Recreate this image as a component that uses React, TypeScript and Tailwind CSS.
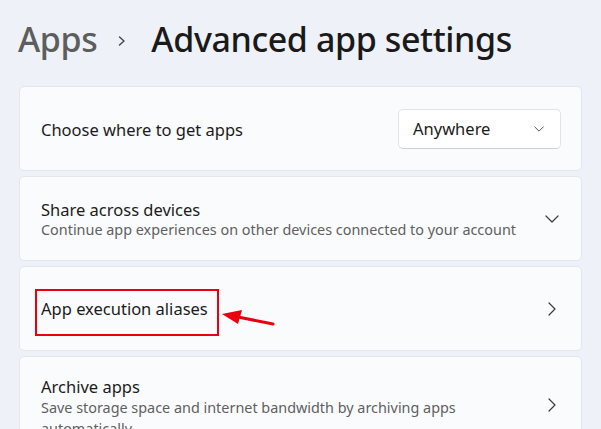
import React from 'react';

const ChevronDown = ({ className }: { className?: string }) => (
  <svg className={className} width="14" height="8" viewBox="0 0 14 8" fill="none">
    <path d="M1 1l6 6 6-6" stroke="#3b3b3b" strokeWidth="1.2" strokeLinecap="round" strokeLinejoin="round" />
  </svg>
);

const ChevronRight = ({ className }: { className?: string }) => (
  <svg className={className} width="8" height="14" viewBox="0 0 8 14" fill="none">
    <path d="M1 1l6 6-6 6" stroke="#3b3b3b" strokeWidth="1.2" strokeLinecap="round" strokeLinejoin="round" />
  </svg>
);

const Card = ({ children, className = '' }: { children: React.ReactNode; className?: string }) => (
  <div
    className={
      'flex items-center justify-between rounded-[5px] border border-[#e3e6eb] bg-[#fafbfd] pl-[21px] ' + className
    }
  >
    {children}
  </div>
);

export default function App() {
  return (
    <div
      className="h-[429px] w-[601px] overflow-hidden bg-[#eef2f8] text-[#1b1b1b]"
      style={{ fontFamily: '"Noto Sans", "Open Sans", sans-serif' }}
    >
      <header className="flex h-[86px] items-center pb-[7px] pl-[18px]">
        <span className="text-[34px] font-medium tracking-[-0.4px] text-[#5d5d5d]">Apps</span>
        <svg className="ml-[21px] mr-[25px] mt-[2px]" width="8" height="10" viewBox="0 0 8 10" fill="none">
          <path d="M1.5 1l4.5 4-4.5 4" stroke="#444" strokeWidth="1.4" strokeLinecap="round" strokeLinejoin="round" />
        </svg>
        <span className="text-[34px] font-medium tracking-[-0.4px] text-[#1a1a1a]">Advanced app settings</span>
      </header>

      <div className="flex flex-col gap-[5px] px-[19px]">
        <Card className="h-[85px] pr-[20px]">
          <span className="pt-[3px] text-[16.5px]">Choose where to get apps</span>
          <div className="flex h-[40px] w-[163px] items-center justify-between rounded-[5px] border border-[#e1e3e6] border-b-[#cfd1d4] bg-white pl-[14px] pr-[16px]">
            <span className="pt-[1px] text-[16.5px]">Anywhere</span>
            <ChevronDown className="h-[6px] w-[10px]" />
          </div>
        </Card>

        <Card className="h-[85px] pr-[22px]">
          <div className="flex flex-col pt-[2px]">
            <span className="text-[16.5px] leading-[21px]">Share across devices</span>
            <span className="text-[14.4px] leading-[20px] text-[#5f5f5f]">
              Continue app experiences on other devices connected to your account
            </span>
          </div>
          <ChevronDown />
        </Card>

        <Card className="relative h-[85px] pr-[25px]">
          <span className="pt-[2px] text-[16.5px]">App execution aliases</span>
          <ChevronRight />
          <div className="absolute left-[15px] top-[22px] h-[47px] w-[184px] border-[2px] border-[#e8000f]" />
          <svg className="absolute left-[200px] top-[41px]" width="56" height="20" viewBox="0 0 56 20">
            <path d="M53 16 L18 9" stroke="#e8000f" strokeWidth="3" strokeLinecap="round" />
            <path d="M2 6 L22 2 L18 16 Z" fill="#e8000f" />
          </svg>
        </Card>

        <Card className="h-[100px] items-start pr-[25px] pt-[19px]">
          <div className="flex flex-col">
            <span className="text-[16.5px] leading-[21px]">Archive apps</span>
            <span className="text-[14.4px] leading-[21px] text-[#5f5f5f]">
              Save storage space and internet bandwidth by archiving apps
              <br />
              automatically
            </span>
          </div>
          <ChevronRight className="mt-[22px]" />
        </Card>
      </div>
    </div>
  );
}
